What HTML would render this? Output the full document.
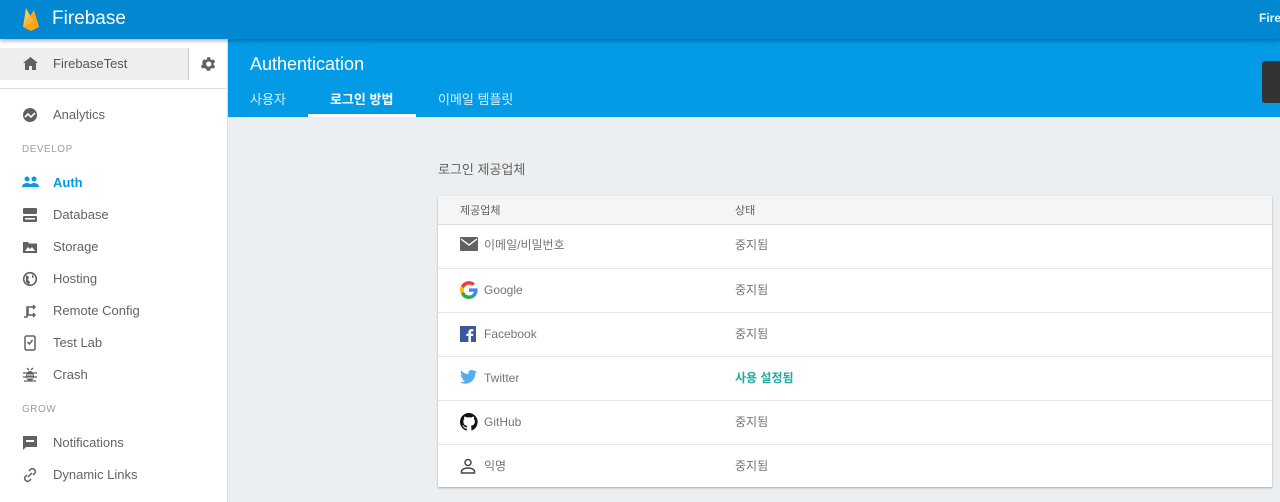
<!DOCTYPE html>
<html><head><meta charset="utf-8"><style>
*{margin:0;padding:0;box-sizing:border-box}
body{width:1280px;height:502px;overflow:hidden;background:#eceff1;font-family:"Liberation Sans","Noto Sans CJK KR",sans-serif;position:relative;color:#616161}
.abs{position:absolute}
#top{left:0;top:0;width:1280px;height:39px;background:#0288d1;box-shadow:0 2px 4px rgba(0,0,0,.3);z-index:3}
#sub{left:228px;top:39px;width:1052px;height:78px;background:#039be5}
#side{left:0;top:39px;width:228px;height:463px;background:#fff;border-right:1px solid #ddd;z-index:2}
.nav{position:absolute;left:0;width:228px;height:32px;font-size:13px;color:#5f6368}
.nav svg{position:absolute;left:22px;top:8px}
.nav span{position:absolute;left:53px;top:8px;line-height:16px}
.sec{position:absolute;left:22px;font-size:10px;color:#9e9e9e;letter-spacing:.5px}
#card{left:438px;top:196px;width:834px;height:291px;background:#fff;box-shadow:0 1px 2px rgba(0,0,0,.3)}
.row{position:absolute;left:0;width:834px;height:44px;border-top:1px solid #e6e6e6;font-size:12px;color:#757575}
.row svg{position:absolute;left:22px;top:13px}
.row .n{position:absolute;left:46px;top:13px;line-height:16px}
.row .s{position:absolute;left:297px;top:13px;line-height:16px}
</style></head><body>
<div id="top" class="abs">
<svg class="abs" style="left:22px;top:7px" width="18" height="24" viewBox="0 0 18 24"><path d="M1 20L4 1l5 9z" fill="#ffc24a"/><path d="M1 20L12 3l5 17-8 4z" fill="#ffa712"/><path d="M1 20l8-10 2 4z" fill="#f4bd62" opacity=".7"/></svg>
<div class="abs" style="left:52px;top:8px;font-size:19px;line-height:22px;color:#fff">Firebase</div>
<div class="abs" style="left:1259px;top:11px;font-size:12px;color:#e1f5fe;font-weight:bold">Fire</div>
</div>
<div id="sub" class="abs">
<div class="abs" style="left:22px;top:15px;font-size:18px;color:#fff">Authentication</div>
<div class="abs" style="left:22px;top:53px;font-size:13px;line-height:16px;color:#d6eefb">사용자</div>
<div class="abs" style="left:102px;top:53px;font-size:13px;line-height:16px;color:#fff;font-weight:bold">로그인 방법</div>
<div class="abs" style="left:80px;top:75px;width:108px;height:3px;background:#fff"></div>
<div class="abs" style="left:210px;top:53px;font-size:13px;line-height:16px;color:#d6eefb">이메일 템플릿</div>
<div class="abs" style="left:1034px;top:22px;width:20px;height:42px;background:#333;border-radius:3px"></div>
</div>
<div id="side" class="abs">
<div class="abs" style="left:0;top:9px;width:188px;height:32px;background:#eee"></div>
<div class="abs" style="left:188px;top:9px;width:1px;height:32px;background:#ccc"></div>
<svg class="abs" style="left:23px;top:18px" width="15" height="13" viewBox="0 0 15 13"><path d="M6 13V9h3v4h4V6h2L7.5 0 0 6h2v7z" fill="#616161"/></svg>
<div class="abs" style="left:53px;top:17px;font-size:13px;color:#555">FirebaseTest</div>
<svg class="abs" style="left:199px;top:16px" width="18" height="18" viewBox="0 0 24 24"><path fill="#616161" d="M19.4 13a7.5 7.5 0 000-2l2.1-1.6-2-3.5-2.5 1a7 7 0 00-1.7-1L15 3h-4l-.4 2.6a7 7 0 00-1.7 1l-2.5-1-2 3.5L4.6 11a7.5 7.5 0 000 2l-2.1 1.6 2 3.5 2.5-1a7 7 0 001.7 1L11 21h4l.4-2.6a7 7 0 001.7-1l2.5 1 2-3.5zM13 15.5a3.5 3.5 0 110-7 3.5 3.5 0 010 7z"/></svg>
<div class="abs" style="left:0;top:49px;width:228px;height:1px;background:#e0e0e0"></div>
<div class="nav" style="top:60px"><svg width="16" height="16" viewBox="0 0 16 16"><circle cx="8" cy="8" r="7" fill="#616161"/><path d="M3 10l3-3 3 3 4-4" stroke="#fff" stroke-width="1.6" fill="none"/></svg><span>Analytics</span></div>
<div class="sec" style="top:105px">DEVELOP</div>
<div class="nav" style="top:128px;color:#039be5;font-weight:bold"><svg width="17" height="14" viewBox="0 0 17 14"><circle cx="5" cy="4" r="2.5" fill="#039be5"/><circle cx="12" cy="4" r="2.5" fill="#039be5"/><path d="M0 12c0-3 3-4 5-4s5 1 5 4zM8 12c0-3 2-4 4-4s5 1 5 4z" fill="#039be5"/></svg><span>Auth</span></div>
<div class="nav" style="top:160px"><svg width="16" height="16" viewBox="0 0 16 16"><rect x="1" y="1" width="14" height="6" rx="1" fill="#616161"/><rect x="1" y="9" width="14" height="6" rx="1" fill="#616161"/><rect x="3" y="11" width="10" height="1.5" fill="#fff"/></svg><span>Database</span></div>
<div class="nav" style="top:192px"><svg width="16" height="16" viewBox="0 0 16 16"><path d="M1 3h5l1 1.5h8V14H1z" fill="#616161"/><path d="M3 12l3-4 2 2 2-2 3 4z" fill="#fff"/></svg><span>Storage</span></div>
<div class="nav" style="top:224px"><svg width="16" height="16" viewBox="0 0 16 16"><circle cx="8" cy="8" r="6.3" stroke="#616161" stroke-width="1.6" fill="none"/><path d="M4 4l3 2-1 3 2 2-1 3-3-3zM10 3l2 3-2 1z" fill="#616161"/></svg><span>Hosting</span></div>
<div class="nav" style="top:256px"><svg width="16" height="16" viewBox="0 0 16 16"><path d="M2 14h3V4h8M13 12H6V5M11 2l2 2-2 2M11 10l2 2-2 2" stroke="#616161" stroke-width="1.5" fill="none"/></svg><span>Remote Config</span></div>
<div class="nav" style="top:288px"><svg width="16" height="16" viewBox="0 0 16 16"><rect x="3" y="1" width="10" height="14" rx="1.5" stroke="#616161" stroke-width="1.5" fill="none"/><path d="M5.5 7l2 2 3-4" stroke="#616161" stroke-width="1.5" fill="none"/></svg><span>Test Lab</span></div>
<div class="nav" style="top:320px"><svg width="16" height="16" viewBox="0 0 16 16"><ellipse cx="8" cy="9" rx="4" ry="5" fill="#616161"/><path d="M1 6h14M1 10h14M2 14h12M5 1l2 2M11 1L9 3" stroke="#616161" stroke-width="1.3"/><path d="M5 8h6M5 11h6" stroke="#fff"/></svg><span>Crash</span></div>
<div class="sec" style="top:365px">GROW</div>
<div class="nav" style="top:388px"><svg width="16" height="16" viewBox="0 0 16 16"><path d="M1 1h14v11H4l-3 3z" fill="#616161"/><rect x="4" y="5" width="8" height="2" fill="#fff"/></svg><span>Notifications</span></div>
<div class="nav" style="top:420px"><svg width="16" height="16" viewBox="0 0 16 16"><path d="M7 4l2-2a3 3 0 014 4l-2 2M9 12l-2 2a3 3 0 01-4-4l2-2M6 10l4-4" stroke="#616161" stroke-width="1.5" fill="none"/></svg><span>Dynamic Links</span></div>
</div>
<div class="abs" style="left:438px;top:162px;font-size:13px;line-height:16px;color:#616161">로그인 제공업체</div>
<div id="card" class="abs">
<div class="abs" style="left:0;top:0;width:834px;height:29px;background:#f5f5f5;border-bottom:1px solid #ddd"></div>
<div class="abs" style="left:22px;top:8px;font-size:11px;line-height:14px;color:#616161">제공업체</div>
<div class="abs" style="left:297px;top:8px;font-size:11px;line-height:14px;color:#616161">상태</div>
<div class="row" style="top:28px;border-top:none"><svg width="18" height="14" viewBox="0 0 18 14"><rect width="18" height="14" rx="1" fill="#616161"/><path d="M1 2l8 6 8-6" stroke="#fff" stroke-width="1.4" fill="none"/></svg><span class="n">이메일/비밀번호</span><span class="s">중지됨</span></div>
<div class="row" style="top:72px"><svg width="18" height="18" viewBox="0 0 18 18" style="top:12px"><path d="M17.6 9.2c0-.6 0-1.2-.2-1.8H9v3.4h4.8a4 4 0 01-1.8 2.7v2.2h2.9c1.7-1.6 2.7-3.9 2.7-6.5z" fill="#4285f4"/><path d="M9 18c2.4 0 4.5-.8 5.9-2.2L12 13.6c-.8.5-1.8.9-3 .9-2.3 0-4.3-1.6-5-3.7H1v2.3A9 9 0 009 18z" fill="#34a853"/><path d="M4 10.8a5.4 5.4 0 010-3.5V5H1a9 9 0 000 8z" fill="#fbbc05"/><path d="M9 3.6c1.3 0 2.5.5 3.4 1.300L15 2.4A9 9 0 001 5l3 2.3c.7-2.1 2.7-3.7 5-3.7z" fill="#ea4335"/></svg><span class="n">Google</span><span class="s">중지됨</span></div>
<div class="row" style="top:116px"><svg width="16" height="16" viewBox="0 0 16 16"><rect width="16" height="16" fill="#3b5998"/><path d="M11 16v-6h2l.3-2.3H11V6.3c0-.7.2-1.1 1.1-1.1h1.3v-2a15 15 0 00-1.9-.1c-1.9 0-3.1 1.1-3.1 3.2v1.4H6.3V10h2.1v6z" fill="#fff"/></svg><span class="n">Facebook</span><span class="s">중지됨</span></div>
<div class="row" style="top:160px"><svg width="17" height="14" viewBox="0 0 24 20"><path fill="#55acee" d="M24 2.4a10 10 0 01-2.8.8A5 5 0 0023.300.4a10 10 0 01-3.1 1.2A4.9 4.9 0 0011.8 6 14 14 0 011.7.9a4.9 4.9 0 001.5 6.6 5 5 0 01-2.2-.6 4.9 4.9 0 003.9 4.9 5 5 0 01-2.2.1 4.9 4.9 0 004.6 3.4A9.9 9.9 0 010 17.3 14 14 0 007.5 19.5c9.1 0 14-7.5 14-14v-.6A10 10 0 0024 2.4z"/></svg><span class="n">Twitter</span><span class="s" style="color:#1eaaa0;font-weight:bold">사용 설정됨</span></div>
<div class="row" style="top:204px"><svg width="18" height="18" viewBox="0 0 16 16" style="top:12px"><path fill="#111" d="M8 0a8 8 0 00-2.5 15.6c.4 0 .5-.2.5-.4v-1.5c-2.2.5-2.7-1-2.7-1-.4-.9-.9-1.2-.9-1.200-.7-.5.1-.5.1-.5.8.1 1.2.8 1.2.8.7 1.3 1.9.9 2.4.7 0-.5.3-.9.5-1.1-1.8-.2-3.6-.9-3.6-4 0-.9.3-1.6.8-2.1-.1-.2-.4-1 .1-2.1 0 0 .7-.2 2.2.8a7.5 7.5 0 014 0c1.5-1 2.2-.8 2.2-.8.4 1.1.2 1.9.1 2.1.5.6.8 1.3.8 2.1 0 3.1-1.9 3.7-3.6 3.9.3.3.5.8.5 1.5v2.2c0 .2.1.5.6.4A8 8 0 008 0z"/></svg><span class="n">GitHub</span><span class="s">중지됨</span></div>
<div class="row" style="top:248px"><svg width="16" height="16" viewBox="0 0 16 16"><circle cx="8" cy="4.5" r="3" stroke="#444" stroke-width="1.5" fill="none"/><path d="M1.5 15v-1.5c0-2 3-3.5 6.5-3.5s6.5 1.5 6.5 3.5V15z" stroke="#444" stroke-width="1.5" fill="none"/></svg><span class="n">익명</span><span class="s">중지됨</span></div>
</div>
</body></html>
